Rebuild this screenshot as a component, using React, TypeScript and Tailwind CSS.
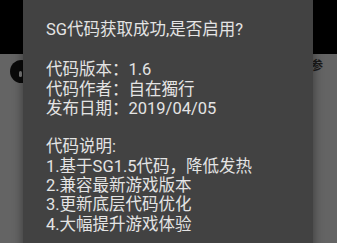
import React from "react";

export default function App() {
  const font = { fontFamily: 'Roboto, "Noto Sans CJK SC", sans-serif' };
  return (
    <div className="relative w-[337px] h-[243px] overflow-hidden bg-[#666666]" style={font}>
      {/* background page */}
      <div className="flex flex-col h-full">
        <div className="h-[54px] bg-black shrink-0" />
        <div className="flex-1 bg-[#646464]">
          <div className="flex items-start justify-between pl-[10px] pr-[14px] pt-[5px]">
            <div className="mt-[1px] w-[23px] h-[23px] rounded-full bg-[#0a0a0a] flex items-center justify-center">
              <div className="mt-[5px] -ml-[2px] w-[3px] h-[6px] bg-[#7a7a7a] rounded-sm" />
            </div>
            <div className="text-[12px] leading-[14px] font-bold text-[#1a1a1a]">参</div>
          </div>
        </div>
      </div>

      {/* dialog overlay */}
      <div className="absolute left-[23px] top-0 w-[290px] h-[260px] bg-[#424242] shadow-[0_0_10px_rgba(0,0,0,0.45)] pl-[23px] pt-[20px] text-[#e4e4e4] text-[16.5px] leading-[19.3px]">
        <div>SG代码获取成功,是否启用?</div>
        <div className="mt-[21px] whitespace-pre-line">
          {"代码版本：1.6\n代码作者：自在獨行\n发布日期：2019/04/05\n\n代码说明:\n1.基于SG1.5代码，降低发热\n2.兼容最新游戏版本\n3.更新底层代码优化\n4.大幅提升游戏体验"}
        </div>
      </div>
    </div>
  );
}
